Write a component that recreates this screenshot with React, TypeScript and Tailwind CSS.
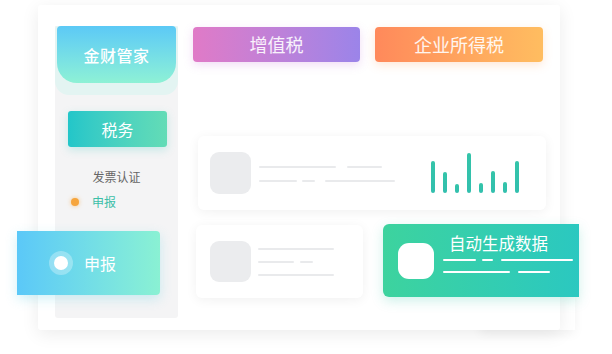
import React from "react";

const bars = [32, 21, 9, 40, 10, 22, 11, 32];

const Line = ({ w, ml = 0, className = "bg-[#e9eaec]" }: { w: number; ml?: number; className?: string }) => (
  <div className={`h-[2px] rounded-full ${className}`} style={{ width: w, marginLeft: ml }} />
);

const App: React.FC = () => {
  return (
    <div
      className="relative w-[612px] h-[354px] bg-white overflow-hidden"
      style={{ fontFamily: '"Noto Sans CJK SC", "Noto Sans", sans-serif' }}
    >
      {/* white extension under the green card */}
      <div className="absolute left-[480px] top-[290px] w-[95px] h-[40px] bg-white shadow-[0_4px_10px_rgba(0,0,0,0.05)]" />

      {/* main panel */}
      <div className="relative ml-[38px] mt-[5px] w-[522px] h-[325px] bg-white rounded-[3px] shadow-[0_4px_18px_rgba(0,0,0,0.08)] flex">
        {/* sidebar */}
        <div className="ml-[17px] mt-[21px] w-[123px] h-[292px] flex flex-col bg-[#f4f4f5] rounded-b-[3px]">
          <div className="h-[69px] bg-[#e3f4f2] rounded-t-[3px] rounded-b-[14px]">
            <div className="mx-[2px] h-[57px] rounded-t-[4px] rounded-b-[20px] bg-gradient-to-b from-[#5cc9f6] to-[#8ef1d5] flex items-center justify-center text-white text-[16px] font-medium tracking-[0.5px]">
              金财管家
            </div>
          </div>
          <div className="mt-[16px] ml-[13px] w-[99px] h-[36px] rounded-[3px] bg-gradient-to-r from-[#22c6c9] to-[#63dcb6] shadow-[0_3px_8px_rgba(60,200,190,0.25)] flex items-center justify-center text-white text-[16px]">
            税务
          </div>
          <div className="mt-[21px] text-center text-[12px] leading-[18px] text-[#666]">发票认证</div>
          <div className="mt-[7px] ml-[16px] flex items-center text-[12px] leading-[18px] text-[#3cbfa8]">
            <span className="w-[8px] h-[8px] rounded-full bg-[#f6a53d] shadow-[0_0_4px_rgba(246,165,61,0.6)]" />
            <span className="ml-[13px]">申报</span>
          </div>
        </div>

        {/* content */}
        <div className="flex-1 flex flex-col">
          <div className="mt-[22px] ml-[15px] flex gap-[15px]">
            <div className="w-[167px] h-[35px] rounded-[4px] bg-gradient-to-r from-[#e07ac7] to-[#9b84e9] shadow-[0_3px_10px_rgba(200,120,220,0.25)] flex items-center justify-center text-white/90 text-[18px]">
              增值税
            </div>
            <div className="w-[168px] h-[35px] rounded-[4px] bg-gradient-to-r from-[#ff895b] to-[#ffbd60] shadow-[0_3px_10px_rgba(255,160,90,0.25)] flex items-center justify-center text-white/90 text-[18px]">
              企业所得税
            </div>
          </div>

          {/* card 1 */}
          <div className="mt-[74px] ml-[20px] w-[348px] h-[74px] rounded-[6px] bg-white shadow-[0_2px_12px_rgba(0,0,0,0.06)] flex items-center">
            <div className="ml-[12px] w-[41px] h-[42px] rounded-[9px] bg-[#ebecee]" />
            <div className="ml-[8px] flex flex-col gap-[12px] mt-[2px]">
              <div className="flex">
                <Line w={77} />
                <Line w={35} ml={11} />
              </div>
              <div className="flex">
                <Line w={38} />
                <Line w={13} ml={5} />
                <Line w={70} ml={10} />
              </div>
            </div>
            <div className="ml-[36px] h-[42px] flex items-end gap-[8.5px] pb-[1px]">
              {bars.map((h, i) => (
                <div
                  key={i}
                  className="w-[3.5px] rounded-full bg-gradient-to-b from-[#34c4a9] to-[#32bfae]"
                  style={{ height: h }}
                />
              ))}
            </div>
          </div>

          {/* card 2 */}
          <div className="mt-[15px] ml-[18px] w-[167px] h-[73px] rounded-[6px] bg-white shadow-[0_2px_12px_rgba(0,0,0,0.06)] flex items-center">
            <div className="ml-[14px] w-[41px] h-[41px] rounded-[9px] bg-[#ebecee]" />
            <div className="ml-[7px] flex flex-col gap-[11px]">
              <Line w={76} />
              <div className="flex">
                <Line w={36} />
                <Line w={13} ml={6} />
              </div>
              <Line w={76} />
            </div>
          </div>
        </div>
      </div>

      {/* floating 申报 card */}
      <div className="absolute left-[17px] top-[231px] w-[143px] h-[64px] rounded-r-[4px] bg-gradient-to-r from-[#5bc8f8] to-[#8af1d3] shadow-[0_4px_12px_rgba(100,210,230,0.3)] flex items-center">
        <div className="ml-[32px] w-[24px] h-[24px] rounded-full bg-white/30 flex items-center justify-center">
          <div className="w-[14px] h-[14px] rounded-full bg-white" />
        </div>
        <span className="ml-[11px] text-white text-[16px]">申报</span>
      </div>

      {/* green card */}
      <div className="absolute left-[383px] top-[224px] w-[196px] h-[73px] rounded-l-[6px] bg-gradient-to-r from-[#3dd39e] to-[#2bc8c0] shadow-[0_4px_12px_rgba(60,200,170,0.25)] flex items-center">
        <div className="ml-[15px] w-[36px] h-[36px] rounded-[11px] bg-white" />
        <div className="ml-[9px] self-start pt-[8px] flex flex-col">
          <div className="ml-[6px] text-white text-[16.5px] leading-[22px]">自动生成数据</div>
          <div className="mt-[5px] flex">
            <Line w={33} className="bg-white h-[2.5px]" />
            <Line w={11} ml={6} className="bg-white h-[2.5px]" />
            <Line w={72} ml={8} className="bg-white h-[2.5px]" />
          </div>
          <div className="mt-[10px] flex">
            <Line w={67} className="bg-white h-[2.5px]" />
            <Line w={32} ml={8} className="bg-white h-[2.5px]" />
          </div>
        </div>
      </div>
    </div>
  );
};

export default App;
